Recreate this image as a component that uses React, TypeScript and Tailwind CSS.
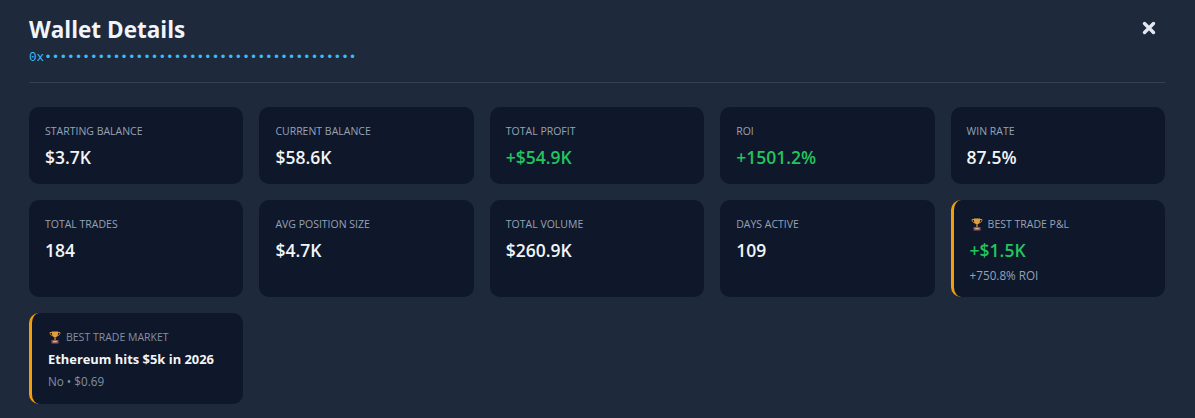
const font = { fontFamily: '"Open Sans", "Noto Sans", sans-serif' };

const Trophy = () => (
    <svg width="12" height="13" viewBox="0 0 12 13" className="mr-[5px] shrink-0">
        <path d="M1 1.5h2M9 1.5h2M1 1.5c0 2 1 3 3 3.400M11 1.500c0 2-1 3-3 3.400" fill="none" stroke="#c98a3a" strokeWidth="1" />
        <path d="M2.800 0.500h6.400c0 3-.6 5-2.400 6H5.200c-1.800-1-2.400-3-2.400-6z" fill="#e0a03c" />
        <rect x="5.200" y="6.500" width="1.600" height="2.500" fill="#b87a30" />
        <rect x="2.500" y="9" width="7" height="3.500" rx="0.500" fill="#8d5a5a" />
        <rect x="4.200" y="10.200" width="3.600" height="1" fill="#e8c9a0" />
    </svg>
);

type Stat = { label: string; value: string; green?: boolean };

const row1: Stat[] = [
    { label: "STARTING BALANCE", value: "$3.7K" },
    { label: "CURRENT BALANCE", value: "$58.6K" },
    { label: "TOTAL PROFIT", value: "+$54.9K", green: true },
    { label: "ROI", value: "+1501.2%", green: true },
    { label: "WIN RATE", value: "87.5%" },
];

const row2: Stat[] = [
    { label: "TOTAL TRADES", value: "184" },
    { label: "AVG POSITION SIZE", value: "$4.7K" },
    { label: "TOTAL VOLUME", value: "$260.9K" },
    { label: "DAYS ACTIVE", value: "109" },
];

const StatCard = ({ label, value, green }: Stat) => (
    <div className="rounded-[10px] bg-[#0f172a] px-4 pt-[17px] pb-[15px]">
        <div className="text-[10.500px] leading-[14px] text-[#94a3b8]">{label}</div>
        <div className={`mt-[7px] text-[17.500px] leading-[24px] font-semibold ${green ? "text-[#22c55e]" : "text-[#f1f5f9]"}`}>{value}</div>
    </div>
);

export default function App() {
    return (
        <div className="h-[418px] w-[1195px] overflow-hidden bg-[#1e293b] pt-[15px] pr-[30px] pl-[29px]" style={font}>
            <div className="flex h-[68px] items-start justify-between border-b border-[#334155]">
                <div>
                    <h2 className="text-[22.500px] leading-[30px] font-bold text-[#f1f5f9]">Wallet Details</h2>
                    <div className="mt-[5px] text-[12.700px] leading-[16px] text-[#38bdf8]" style={{ fontFamily: '"Liberation Mono", monospace' }}>
                        0x{"•".repeat(41)}
                    </div>
                </div>
                <svg width="14" height="14" viewBox="0 0 14 14" className="mt-[6px] mr-[9px]">
                    <path d="M2.500 2.500l9 9M11.500 2.500l-9 9" stroke="#e2e8f0" strokeWidth="3.400" strokeLinecap="round" />
                </svg>
            </div>

            <div className="mt-6 grid grid-cols-5 gap-4">
                {row1.map((s) => (
                    <StatCard key={s.label} {...s} />
                ))}
                {row2.map((s) => (
                    <StatCard key={s.label} {...s} />
                ))}
                <div className="rounded-[10px] border-l-[3px] border-[#f59e0b] bg-[#0f172a] pt-[17px] pr-4 pb-[14px] pl-[16px]">
                    <div className="flex items-center pl-[1px] text-[10.500px] leading-[14px] text-[#94a3b8]">
                        <Trophy />
                        BEST TRADE P&amp;L
                    </div>
                    <div className="mt-[7px] text-[17.500px] leading-[24px] font-semibold text-[#22c55e]">+$1.5K</div>
                    <div className="mt-[5px] text-[11.700px] leading-[16px] text-[#94a3b8]">+750.8% ROI</div>
                </div>
                <div className="rounded-[10px] border-l-[3px] border-[#f59e0b] bg-[#0f172a] pt-[17px] pr-4 pb-[15px] pl-[16px]">
                    <div className="flex items-center pl-[1px] text-[10.500px] leading-[14px] text-[#8290a5]">
                        <Trophy />
                        BEST TRADE MARKET
                    </div>
                    <div className="mt-[6px] text-[12.900px] leading-[18px] font-bold text-[#f1f5f9]">Ethereum hits $5k in 2026</div>
                    <div className="mt-[5px] text-[11.700px] leading-[16px] text-[#8290a5]">No • $0.69</div>
                </div>
            </div>
        </div>
    );
}
